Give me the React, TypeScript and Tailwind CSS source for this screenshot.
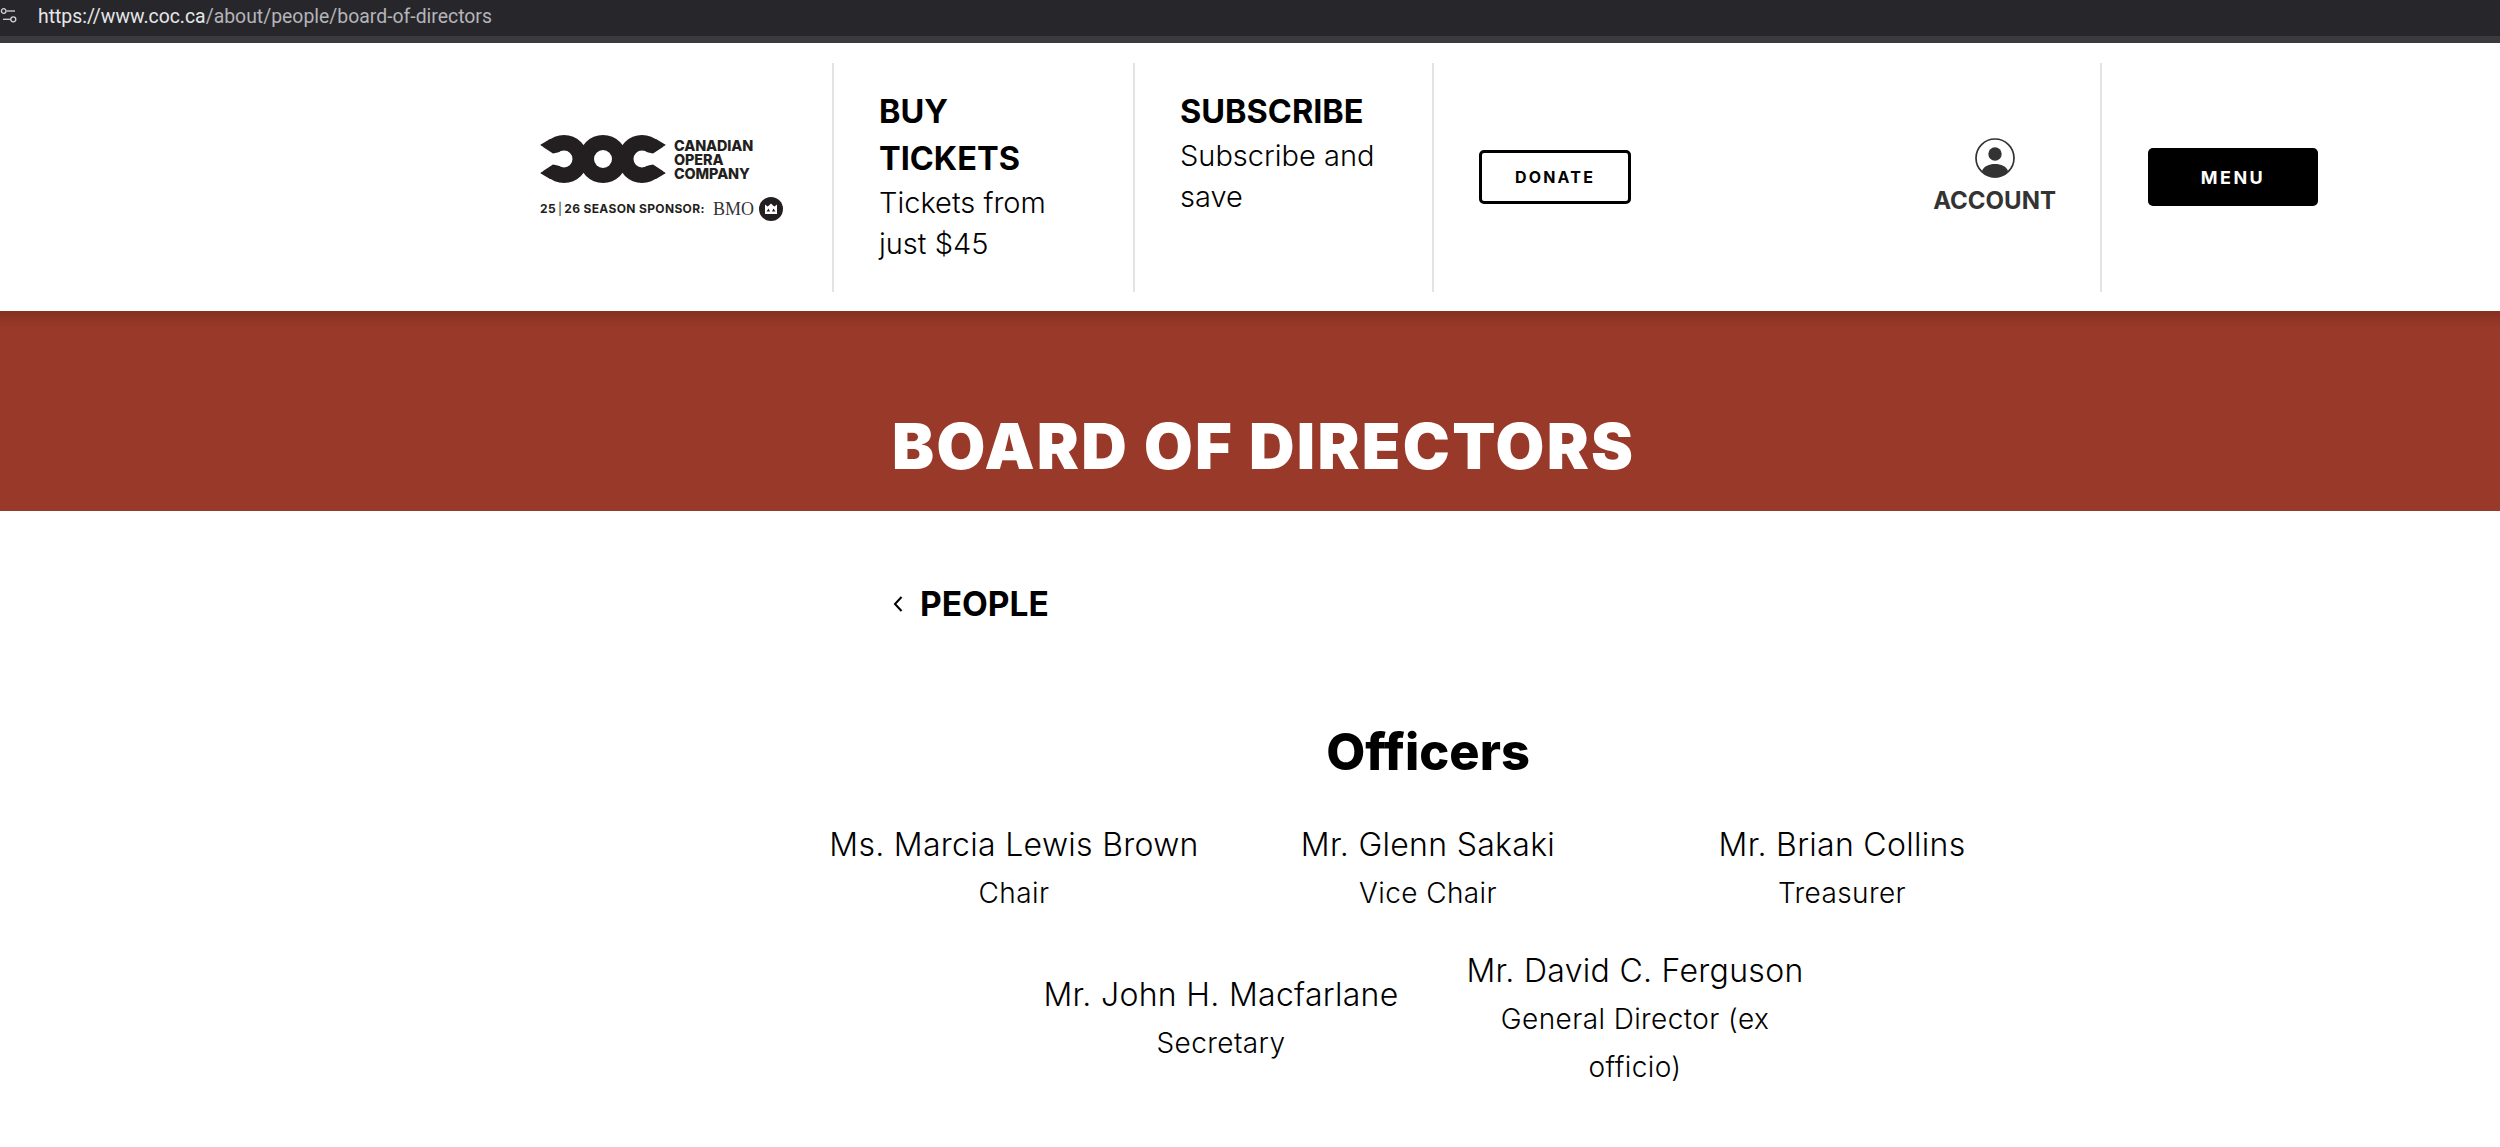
const officers = [
  { name: 'Ms. Marcia Lewis Brown', role: 'Chair' },
  { name: 'Mr. Glenn Sakaki', role: 'Vice Chair' },
  { name: 'Mr. Brian Collins', role: 'Treasurer' },
  { name: 'Mr. John H. Macfarlane', role: 'Secretary' },
  { name: 'Mr. David C. Ferguson', role: 'General Director (ex officio)' },
];

function CocMark() {
  return (
    <svg width="126" height="48" viewBox="0 0 126 48">
      <circle cx="24" cy="24" r="24" fill="#231f20" />
      <circle cx="63" cy="24" r="24" fill="#231f20" />
      <circle cx="102" cy="24" r="24" fill="#231f20" />
      <path d="M0 10 L13 18.5 V4 H10 Z M0 38 L13 29.5 V44 H10 Z" fill="#231f20" />
      <path d="M126 10 L113 18.5 V4 H116 Z M126 38 L113 29.5 V44 H116 Z" fill="#231f20" />
      <circle cx="63" cy="24" r="9" fill="#fff" />
      <circle cx="24" cy="24" r="8.5" fill="#fff" />
      <path d="M0 10 L13 18.5 L20 17 V31 L13 29.5 L0 38 Z" fill="#fff" />
      <circle cx="102" cy="24" r="8.5" fill="#fff" />
      <path d="M126 10 L113 18.5 L106 17 V31 L113 29.5 L126 38 Z" fill="#fff" />
    </svg>
  );
}

function BmoRoundel() {
  return (
    <svg width="24" height="24" viewBox="0 0 24 24">
      <circle cx="12" cy="12" r="12" fill="#231f20" />
      <path d="M6 17 V7.5 L8.5 9.5 L10 8.5 L12 6.5 L14 8.5 L15.5 9.5 L18 7.5 V17 Z" fill="#fff" />
      <path d="M7.5 14.5 L9.5 11.5 L11 14.5 Z M13 14.5 L14.5 11.5 L16.5 14.5 Z" fill="#231f20" />
    </svg>
  );
}

function UrlIcon() {
  return (
    <svg width="18" height="16" viewBox="0 0 18 16" fill="none" stroke="#d4d4d8" strokeWidth="1.3" className="self-start mt-[7px]">
      <circle cx="3.7" cy="4" r="2.3" />
      <path d="M6.5 4 H15" />
      <circle cx="13.3" cy="12.3" r="2.5" />
      <path d="M3 12.3 H10.8" />
    </svg>
  );
}

function AccountIcon() {
  return (
    <svg width="40" height="40" viewBox="0 0 40 40">
      <circle cx="20" cy="20" r="19" fill="#fff" stroke="#333" strokeWidth="1.7" />
      <circle cx="20" cy="16" r="6.7" fill="#333" />
      <path d="M7 33 C9 28 14 26 20 26 C26 26 31 28 33 33 C30 37 25 39.5 20 39.5 C15 39.5 10 37 7 33 Z" fill="#333" />
    </svg>
  );
}

export default function App() {
  return (
    <div className="min-h-screen bg-white font-['Inter',sans-serif] text-black">
      <div className="h-[36px] bg-[#27272b] flex items-center gap-[20px] font-['Roboto',sans-serif] text-[19.4px] overflow-hidden">
        <UrlIcon />
        <span className="text-[#b4b4b9] -mt-[3px]">
          <span className="text-[#e6e6e8]">https://www.coc.ca</span>/about/people/board-of-directors
        </span>
      </div>
      <div className="h-[7px] bg-[#3a3a3f]" />

      <header className="h-[268px] flex items-center pl-[540px]">
        <div className="w-[292px] shrink-0 pt-[3px]">
          <div className="flex items-center gap-[8px]">
            <CocMark />
            <div className="font-extrabold text-[#231f20] text-[14.4px] leading-[14px] tracking-[-0.1px] mt-[2px]">
              <div>CANADIAN</div>
              <div>OPERA</div>
              <div>COMPANY</div>
            </div>
          </div>
          <div className="flex items-center mt-[13px] text-[#231f20]">
            <span className="font-bold text-[12px] tracking-[0.35px] w-[173px] whitespace-nowrap">
              25<span className="font-normal mx-[2px]">|</span>26 SEASON SPONSOR:
            </span>
            <span className="font-['Liberation_Serif',serif] text-[18px] w-[46px] text-[#333]">BMO</span>
            <BmoRoundel />
          </div>
        </div>

        <div className="w-[301px] h-[229px] border-l-2 border-[#e3e3e3] pl-[45px] pr-[40px] pt-[25px] shrink-0">
          <div className="font-bold text-[32.5px] leading-[47px]">BUY TICKETS</div>
          <div className="text-[29px] leading-[41px] font-light">Tickets from just $45</div>
        </div>
        <div className="w-[299px] h-[229px] border-l-2 border-[#e3e3e3] pl-[45px] pr-[40px] pt-[25px] shrink-0">
          <div className="font-bold text-[32.5px] leading-[47px]">SUBSCRIBE</div>
          <div className="text-[29px] leading-[41px] font-light">Subscribe and save</div>
        </div>
        <div className="w-[668px] h-[229px] border-l-2 border-[#e3e3e3] pl-[45px] shrink-0 flex items-center">
          <button className="w-[152px] h-[54px] border-[3px] border-black rounded-[5px] text-[16px] font-bold tracking-[2.2px] bg-white">
            DONATE
          </button>
          <div className="ml-auto mr-[44px] flex flex-col items-center text-[#333]">
            <AccountIcon />
            <span className="font-bold text-[24px] leading-[30px] mt-[8px]">ACCOUNT</span>
          </div>
        </div>
        <div className="h-[229px] border-l-2 border-[#e3e3e3] pl-[46px] flex items-center">
          <button className="w-[170px] h-[58px] bg-black text-white rounded-[5px] text-[18px] font-bold tracking-[2.5px]">
            MENU
          </button>
        </div>
      </header>

      <section className="h-[200px] bg-[#98392a] bg-gradient-to-b from-[#86301f] to-[#98392a] to-[8%] pl-[892px] pt-[100px]">
        <h1 className="text-[63px] leading-[70px] font-black tracking-[2.3px] text-white whitespace-nowrap">BOARD OF DIRECTORS</h1>
      </section>

      <main className="pl-[807px] w-[1242px] box-content">
        <a className="flex items-center gap-[17px] ml-[86px] mt-[66px] font-bold text-[33.5px] leading-[54px]">
          <svg width="10" height="18" viewBox="0 0 10 18" fill="none" stroke="#000" strokeWidth="2">
            <path d="M8.5 2 L2 9 L8.5 16" />
          </svg>
          PEOPLE
        </a>
        <h2 className="text-[50.5px] leading-[60px] font-extrabold text-center mt-[91px]">Officers</h2>
        <div className="flex flex-wrap justify-center items-center mt-[39px] gap-y-[30px]">
          {officers.map(o => (
            <div key={o.name} className="w-[414px] text-center shrink-0">
              <div className="text-[32px] leading-[48px] font-light tracking-[0.3px] whitespace-nowrap">{o.name}</div>
              <div className="text-[28px] leading-[48px] font-light tracking-[0.4px] px-[60px]">{o.role}</div>
            </div>
          ))}
        </div>
      </main>
    </div>
  );
}
